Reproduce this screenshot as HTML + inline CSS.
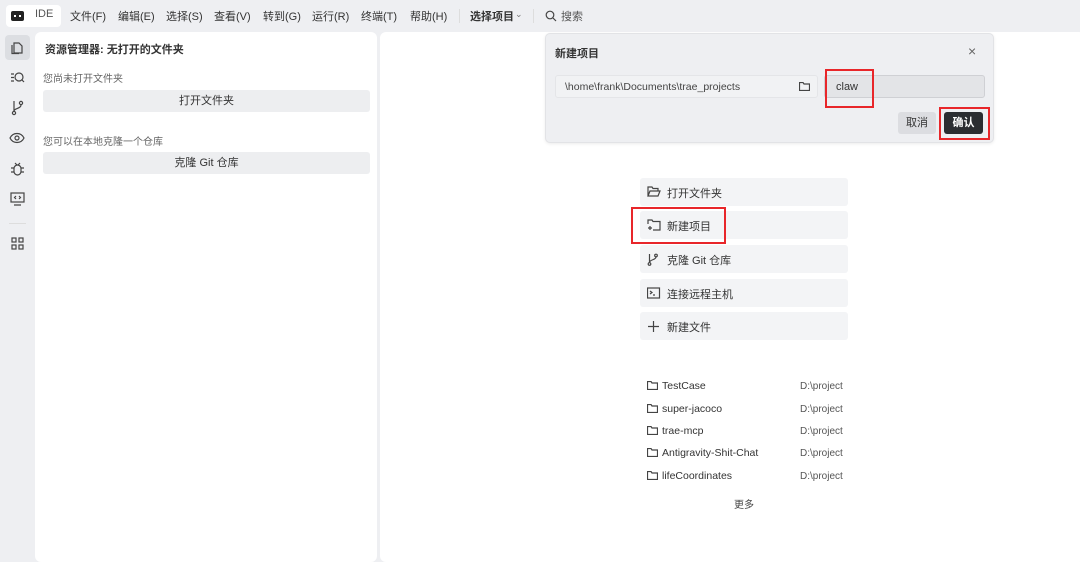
<!DOCTYPE html>
<html><head><meta charset="utf-8"><style>
*{box-sizing:border-box;margin:0;padding:0}
body{width:1080px;height:557px;background:#eeeff2;font-family:"Liberation Sans","Noto Sans CJK SC",sans-serif;color:#333;position:relative;overflow:hidden;font-size:11px}
.a{position:absolute}
.menu span{position:absolute;top:8px;font-size:11px;color:#333}
.panel{background:#fff;border-radius:6px}
.btn{background:#edeef0;border-radius:3px;text-align:center;font-size:11px;color:#333}
.item{position:absolute;left:640px;width:208px;height:28px;background:#f3f4f6;border-radius:3px;font-size:11px}
.item span{position:absolute;left:27px;top:7px}
.item svg{position:absolute;left:7px;top:8px}
.rec{position:absolute;left:646px;width:200px;font-size:10.5px;color:#333}
.rec .n{position:absolute;left:16px;top:1px}
.rec .p{position:absolute;left:154px;top:2px;color:#555;font-size:10px}
.rec svg{position:absolute;left:1px;top:2px}
.red{position:absolute;border:2px solid #e8262a !important}
svg{fill:none;stroke:#444;stroke-width:1.2}
</style></head><body>
<div class="a" style="left:6px;top:5px;width:55px;height:22px;background:#fff;border-radius:4px"></div>
<div class="a" style="left:11px;top:11px;width:13px;height:10px;background:#222;border-radius:2px"></div>
<div class="a" style="left:14px;top:15px;width:2px;height:2px;background:#fff"></div>
<div class="a" style="left:19px;top:15px;width:2px;height:2px;background:#fff"></div>
<div class="menu">
<span style="left:35px;color:#555">IDE</span>
<span style="left:70px">文件(F)</span><span style="left:118px">编辑(E)</span><span style="left:166px">选择(S)</span><span style="left:214px">查看(V)</span><span style="left:263px">转到(G)</span><span style="left:312px">运行(R)</span><span style="left:361px">终端(T)</span><span style="left:410px">帮助(H)</span>
<span style="left:470px;font-weight:bold">选择项目</span><span style="left:515px;color:#777;font-size:9px;top:9px">⌄</span>
<span style="left:561px;color:#555">搜索</span>
</div>
<div class="a" style="left:459px;top:9px;width:1px;height:14px;background:#ddd"></div>
<div class="a" style="left:533px;top:9px;width:1px;height:14px;background:#ddd"></div>
<svg class="a" style="left:545px;top:10px" width="12" height="12" viewBox="0 0 12 12"><circle cx="5" cy="5" r="3.8"/><path d="M8 8l3 3"/></svg>

<div class="a" style="left:5px;top:35px;width:25px;height:25px;background:#dcdee2;border-radius:4px"></div>
<svg class="a" style="left:10px;top:40px" width="15" height="15" viewBox="0 0 15 15"><path d="M4 3h5l3 3v7H4z M2 5v8.5h7"/></svg>
<svg class="a" style="left:10px;top:71px" width="15" height="13" viewBox="0 0 15 13"><path d="M1 3h3M1 6.5h3M1 10h3"/><circle cx="9" cy="6" r="4"/><path d="M12 9l2 2"/></svg>
<svg class="a" style="left:11px;top:100px" width="13" height="16" viewBox="0 0 13 16"><circle cx="3" cy="13" r="1.6"/><circle cx="10" cy="3" r="1.6"/><path d="M3 1v10M10 5c0 4-7 3-7 6"/></svg>
<svg class="a" style="left:9px;top:131px" width="16" height="14" viewBox="0 0 16 14"><path d="M1 7c3-6 11-6 14 0c-3 6-11 6-14 0z"/><circle cx="8" cy="7" r="2"/></svg>
<svg class="a" style="left:10px;top:161px" width="15" height="16" viewBox="0 0 15 16"><rect x="4" y="4" width="7" height="10" rx="3.5"/><path d="M1 7h3M11 7h3M1 11h3M11 11h3M5 2l2 2M10 2l-2 2"/></svg>
<svg class="a" style="left:10px;top:192px" width="15" height="14" viewBox="0 0 15 14"><rect x="1" y="1" width="13" height="9"/><path d="M4 13h7M6 4l-1.5 1.5L6 7M9 4l1.5 1.5L9 7"/></svg>
<div class="a" style="left:9px;top:223px;width:17px;height:1px;background:#ddd"></div>
<svg class="a" style="left:11px;top:237px" width="13" height="13" viewBox="0 0 13 13"><rect x="1" y="1" width="4" height="4"/><rect x="8" y="1" width="4" height="4"/><rect x="1" y="8" width="4" height="4"/><rect x="8" y="8" width="4" height="4"/></svg>

<div class="a panel" style="left:35px;top:32px;width:342px;height:530px"></div>
<div class="a" style="left:45px;top:41px;font-size:11px;font-weight:bold">资源管理器: 无打开的文件夹</div>
<div class="a" style="left:43px;top:70px;font-size:10px;color:#666">您尚未打开文件夹</div>
<div class="a btn" style="left:43px;top:90px;width:327px;height:22px;line-height:22px">打开文件夹</div>
<div class="a" style="left:43px;top:133px;font-size:10px;color:#666">您可以在本地克隆一个仓库</div>
<div class="a btn" style="left:43px;top:152px;width:327px;height:22px;line-height:22px">克隆 Git 仓库</div>

<div class="a panel" style="left:380px;top:32px;width:705px;height:530px"></div>

<div class="a" style="left:545px;top:33px;width:449px;height:110px;background:#eeeff2;border:1px solid #e2e3e6;border-radius:5px;box-shadow:0 1px 3px rgba(0,0,0,.08)"></div>
<div class="a" style="left:555px;top:45px;font-size:11px;font-weight:bold">新建项目</div>
<div class="a" style="left:968px;top:43px;font-size:14px;color:#666">×</div>
<div class="a" style="left:555px;top:75px;width:263px;height:23px;background:#f1f2f4;border:1px solid #e4e5e8;border-radius:3px"></div>
<div class="a" style="left:565px;top:81px;font-size:10.5px;color:#444">\home\frank\Documents\trae_projects</div>
<svg class="a" style="left:799px;top:82px" width="11" height="9" viewBox="0 0 11 9"><path d="M.5 .5h3.5l1 1.5h5.5v6.5h-10z"/></svg>
<div class="a" style="left:824px;top:75px;width:161px;height:23px;background:#e3e4e7;border:1px solid #cfd0d4;border-radius:3px"></div>
<div class="a" style="left:836px;top:81px;font-size:11px">claw</div>
<div class="red" style="left:825px;top:69px;width:49px;height:39px"></div>
<div class="a" style="left:898px;top:112px;width:38px;height:22px;background:#dcdde1;border-radius:3px;text-align:center;line-height:22px;font-size:11px">取消</div>
<div class="a" style="left:944px;top:112px;width:39px;height:22px;background:#2b2d31;border-radius:3px;text-align:center;line-height:22px;font-size:11px;color:#fff;font-weight:bold">确认</div>
<div class="red" style="left:939px;top:107px;width:51px;height:33px"></div>

<div class="item" style="top:178px"><svg width="14" height="12" viewBox="0 0 14 12"><path d="M1 10V1h4l1 1.5h5V5M1 10l2-5h10l-2 5z"/></svg><span>打开文件夹</span></div>
<div class="item" style="top:211px"><svg width="14" height="12" viewBox="0 0 14 12"><path d="M1 5V1h4l1 1.5h7V11H6M1 9h4M3 7v4"/></svg><span>新建项目</span></div>
<div class="red" style="left:631px;top:207px;width:95px;height:37px"></div>
<div class="item" style="top:245px"><svg width="12" height="13" viewBox="0 0 12 13"><circle cx="2.5" cy="11" r="1.3"/><circle cx="9" cy="2.5" r="1.3"/><path d="M2.5 1v8.5M9 4c0 3-6.5 2.5-6.5 5.5"/></svg><span>克隆 Git 仓库</span></div>
<div class="item" style="top:279px"><svg width="14" height="12" viewBox="0 0 14 12"><rect x=".5" y="1" width="12" height="10"/><path d="M3 4l2 1.5L3 7M6 8h2"/></svg><span>连接远程主机</span></div>
<div class="item" style="top:312px"><svg width="13" height="13" viewBox="0 0 13 13"><path d="M6.5 1v11M1 6.5h11"/></svg><span>新建文件</span></div>

<div class="rec" style="top:379px"><svg width="11" height="9" viewBox="0 0 11 9"><path d="M.5 .5h3.5l1 1.5h5.5v6.5h-10z"/></svg><span class="n">TestCase</span><span class="p">D:\project</span></div>
<div class="rec" style="top:402px"><svg width="11" height="9" viewBox="0 0 11 9"><path d="M.5 .5h3.5l1 1.5h5.5v6.5h-10z"/></svg><span class="n">super-jacoco</span><span class="p">D:\project</span></div>
<div class="rec" style="top:424px"><svg width="11" height="9" viewBox="0 0 11 9"><path d="M.5 .5h3.5l1 1.5h5.5v6.5h-10z"/></svg><span class="n">trae-mcp</span><span class="p">D:\project</span></div>
<div class="rec" style="top:446px"><svg width="11" height="9" viewBox="0 0 11 9"><path d="M.5 .5h3.5l1 1.5h5.5v6.5h-10z"/></svg><span class="n">Antigravity-Shit-Chat</span><span class="p">D:\project</span></div>
<div class="rec" style="top:469px"><svg width="11" height="9" viewBox="0 0 11 9"><path d="M.5 .5h3.5l1 1.5h5.5v6.5h-10z"/></svg><span class="n">lifeCoordinates</span><span class="p">D:\project</span></div>
<div class="a" style="left:734px;top:496px;font-size:10px;color:#444">更多</div>
</body></html>
